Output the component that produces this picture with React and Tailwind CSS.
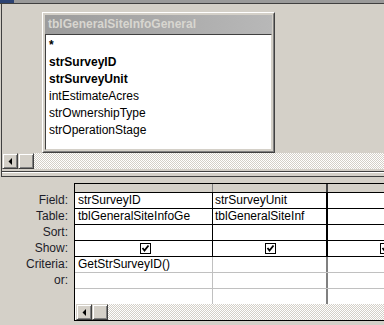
import React from "react";

const hatch =
  "bg-[image:repeating-conic-gradient(#d4d0c8_0_25%,#ffffff_0_50%)] bg-[length:2px_2px]";

function Btn({ arrow }) {
  return (
    <div className="w-[16px] h-[16px] shrink-0 bg-[#d4d0c8] border border-t-[#d4d0c8] border-l-[#d4d0c8] border-r-[#404040] border-b-[#404040] shadow-[inset_1px_1px_0_#ffffff,inset_-1px_-1px_0_#808080] flex items-center justify-center">
      {arrow && (
        <svg width="4" height="7" viewBox="0 0 4 7" className="mr-[1px]">
          <polygon points="4,0 4,7 0.5,3.5" fill="#000" />
        </svg>
      )}
    </div>
  );
}

function ScrollBar() {
  return (
    <div className="flex h-[16px]">
      <Btn arrow />
      <Btn />
      <div className={`flex-1 ${hatch}`} />
    </div>
  );
}

function Check() {
  return (
    <div className="w-[11px] h-[11px] shrink-0 border border-black bg-white flex items-center justify-center">
      <svg width="9" height="9" viewBox="0 0 9 9">
        <polyline
          points="1.5,4 3.5,6.5 7.5,1.5"
          fill="none"
          stroke="#000"
          strokeWidth="1.8"
        />
      </svg>
    </div>
  );
}

const fields = [
  { name: "*", bold: true },
  { name: "strSurveyID", bold: true },
  { name: "strSurveyUnit", bold: true },
  { name: "intEstimateAcres" },
  { name: "strOwnershipType" },
  { name: "strOperationStage" },
];

const topRows = [
  { label: "Field:", a: "strSurveyID", b: "strSurveyUnit" },
  { label: "Table:", a: "tblGeneralSiteInfoGe", b: "tblGeneralSiteInf" },
  { label: "Sort:" },
  { label: "Show:", check: true },
];

export default function App() {
  return (
    <div className="w-[384px] h-[325px] overflow-hidden bg-[#d4d0c8] font-['Liberation_Sans',Arial,sans-serif] text-[12px] text-black flex flex-col">
      {/* window strip */}
      <div className="h-[3px] bg-[#9a9a9a] flex">
        <div className="w-[14px] bg-[#2d4373]" />
      </div>

      {/* table pane */}
      <div className="border-t border-[#404040] flex">
        <div className="w-[1px]" />
        <div className="flex-1 border-l border-[#404040] flex flex-col">
          <div className="relative h-[149px]">
            <div className="absolute left-[40px] top-[8px] w-[233px] h-[141px] border border-t-white border-l-white border-r-[#404040] border-b-[#404040] flex">
              <div className="flex-1 border border-t-[#d4d0c8] border-l-[#d4d0c8] border-r-[#808080] border-b-[#808080] p-[1px] flex flex-col">
                <div className="h-[19px] bg-gradient-to-r from-[#9c9c9c] to-[#b8b8b8] text-[#d8d6d0] font-bold pl-[3px] leading-[19px]">
                  tblGeneralSiteInfoGeneral
                </div>
                <div className="flex-1 bg-white border border-t-[#404040] border-l-[#404040] border-r-[#d4d0c8] border-b-[#d4d0c8] pt-[2px] pl-[3px]">
                  {fields.map((f) => (
                    <div
                      key={f.name}
                      className={`h-[17px] leading-[17px] ${f.bold ? "font-bold" : ""}`}
                    >
                      {f.name}
                    </div>
                  ))}
                </div>
              </div>
            </div>
          </div>
          <ScrollBar />
          <div className="h-[2px]" />
          <div className="h-[6px] border-y border-[#404040] shadow-[inset_0_1px_0_#ffffff]" />
        </div>
      </div>

      {/* design grid */}
      <div className="flex pt-[6px]">
        <div className="w-[74px] shrink-0 pt-[10px] pr-[6px] text-right text-[#1c1c28]">
          {topRows.map((r) => (
            <div key={r.label} className="h-[16px] leading-[15px]">
              {r.label}
            </div>
          ))}
          <div className="h-[16px] leading-[15px]">Criteria:</div>
          <div className="h-[16px] leading-[15px]">or:</div>
        </div>

        <div className="flex-1 border-l border-black flex flex-col">
          {/* column selectors */}
          <div className="h-[10px] border-y border-black flex bg-[#d4d0c8]">
            <div className="w-[138px] border-r border-[#808080]" />
            <div className="w-[115px] border-r-2 border-[#404040]" />
            <div className="flex-1" />
          </div>

          {topRows.map((r) => (
            <div key={r.label} className="h-[16px] border-b border-black flex bg-white">
              <div className="w-[138px] border-r border-black pl-[3px] leading-[15px] overflow-hidden whitespace-nowrap flex items-center justify-center">
                {r.check ? <Check /> : <span className="flex-1">{r.a}</span>}
              </div>
              <div className="w-[115px] border-r-2 border-black pl-[2px] leading-[15px] overflow-hidden whitespace-nowrap flex items-center justify-center">
                {r.check ? <Check /> : <span className="flex-1">{r.b}</span>}
              </div>
              <div className="flex-1 flex items-center pl-[52px] overflow-hidden">
                {r.check && <Check />}
              </div>
            </div>
          ))}

          {["GetStrSurveyID()", "", ""].map((t, i) => (
            <div
              key={i}
              className={`flex bg-white ${i < 2 ? "h-[16px] border-b border-[#c0c0c0]" : "h-[15px]"}`}
            >
              <div className="w-[138px] border-r border-[#c0c0c0] pl-[3px] leading-[15px] whitespace-nowrap overflow-hidden">
                {t}
              </div>
              <div className="w-[115px] border-r-2 border-[#808080]" />
              <div className="flex-1" />
            </div>
          ))}

          <div className="h-[17px] border-b border-black bg-white pl-[1px] flex flex-col">
            <ScrollBar />
          </div>
        </div>
      </div>
    </div>
  );
}
